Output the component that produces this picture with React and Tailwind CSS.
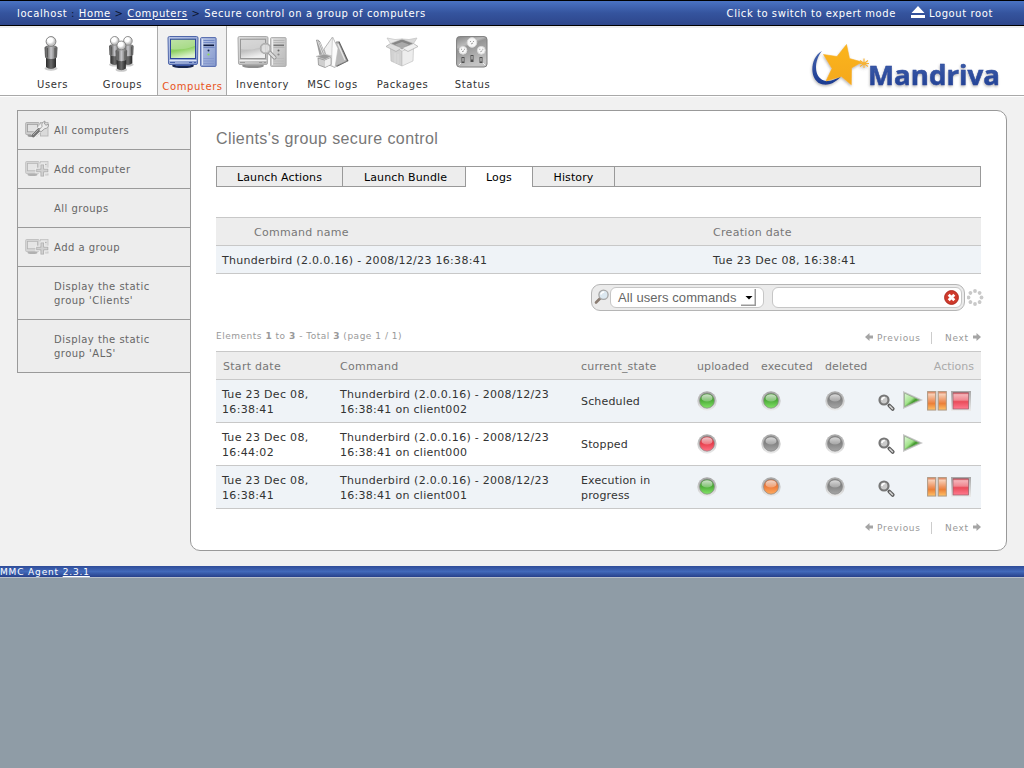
import React from "react";

function Computer({ tint, x = 0 }) {
  const blue = tint === "blue";
  const id = blue ? "blue" : "grey";
  return (
    <g transform={`translate(${x} 0)`}>
      <defs>
        <linearGradient id={`scr-${id}`} x1="0" y1="0" x2="0.3" y2="1">
          <stop offset="0" stopColor={blue ? "#b4dc98" : "#cfcfcf"} />
          <stop offset="0.6" stopColor={blue ? "#8ccf60" : "#c0c0c0"} />
          <stop offset="1" stopColor={blue ? "#dcf2cc" : "#efefef"} />
        </linearGradient>
        <linearGradient id={`case-${id}`} x1="0" y1="0" x2="1" y2="1">
          <stop offset="0" stopColor={blue ? "#b9c6e6" : "#dcdcdc"} />
          <stop offset="1" stopColor={blue ? "#8498cc" : "#b8b8b8"} />
        </linearGradient>
      </defs>
      <ellipse cx="16" cy="29.800" rx="11" ry="2.300" fill={blue ? "#17264f" : "#8e8e8e"} />
      <path d="M6 27h20l-3 3H9z" fill={blue ? "#3a55a4" : "#9c9c9c"} />
      <path d="M1 2q0-1.500 1.500-1.500h27q1.500 0 1.500 1.500l-.5 25q0 1.500-1.500 1.500H3q-1.500 0-1.500-1.500z" fill={`url(#case-${id})`} stroke={blue ? "#5067aa" : "#ababab"} />
      <rect x="3.500" y="3.200" width="25" height="19.300" fill={`url(#scr-${id})`} stroke={blue ? "#2c459b" : "#979797"} />
      <path d="M4 13q11 2 24-3v-6H4z" fill={blue ? "#cdeabb" : "#e4e4e4"} opacity="0.45" />
      <path d="M2.500 24.500h27" stroke={blue ? "#dce4f6" : "#eee"} />
      <path d="M3 26.500h5M22 26.500h3M27 26.500h2" stroke={blue ? "#4660a8" : "#999"} />
      <rect x="33.600" y="1.600" width="15.500" height="28.800" rx="1" fill={`url(#case-${id})`} stroke={blue ? "#5268ad" : "#adadad"} />
      <path d="M35.500 3v26" stroke={blue ? "#dbe3f5" : "#f0f0f0"} />
      <path d="M36.500 4.500h11M36.500 6.500h11M36.500 11.500h11" stroke={blue ? "#7389c4" : "#b6b6b6"} />
      <path d="M36.500 9.300h10.500" stroke={blue ? "#101c40" : "#777"} strokeWidth="1.600" />
      <circle cx="41.500" cy="14.500" r="1" fill={blue ? "#17264f" : "#666"} />
      <circle cx="41.500" cy="18.500" r="1.100" fill={blue ? "#8be04a" : "#8a8a8a"} />
      <path d="M36.500 22.500h10.500M36.500 25h10.500M36.500 27.500h10.500" stroke={blue ? "#8294cb" : "#b8b8b8"} strokeWidth="0.800" />
    </g>
  );
}

function Person({ x, y }) {
  return (
    <g transform={`translate(${x} ${y})`}>
      <ellipse cx="6.500" cy="32.500" rx="6.500" ry="2.200" fill="#777" opacity="0.4" />
      <path d="M1.500 21h10v10q-5 4-10 0z" fill="url(#leg)" />
      <path d="M1.500 10q5-2 10 0l1.500 1.500-.5 10q-6 3-12 0l-.5-10z" fill="url(#suit)" />
      <path d="M3 12v9.500M10.500 12v9.500" stroke="#4a4a4a" strokeWidth="0.800" />
      <circle cx="6.500" cy="5.500" r="4.900" fill="url(#head)" stroke="#777" strokeWidth="0.900" />
    </g>
  );
}

const PersonDefs = () => (
  <defs>
    <linearGradient id="suit" x1="0" x2="1">
      <stop offset="0" stopColor="#555" />
      <stop offset="0.3" stopColor="#8a8a8a" />
      <stop offset="0.5" stopColor="#c6c6ca" />
      <stop offset="0.75" stopColor="#8a8a8a" />
      <stop offset="1" stopColor="#555" />
    </linearGradient>
    <linearGradient id="leg" x1="0" x2="1">
      <stop offset="0" stopColor="#2b2b2b" />
      <stop offset="0.5" stopColor="#6c6c6c" />
      <stop offset="1" stopColor="#262626" />
    </linearGradient>
    <radialGradient id="head" cx="0.4" cy="0.35">
      <stop offset="0.5" stopColor="#fff" />
      <stop offset="1" stopColor="#c4c4c4" />
    </radialGradient>
  </defs>
);

const UsersIcon = () => (
  <svg width="50" height="38" viewBox="0 0 50 38">
    <PersonDefs />
    <Person x={17.500} y={0} />
  </svg>
);

const GroupsIcon = () => (
  <svg width="50" height="38" viewBox="0 0 50 38">
    <g transform="translate(12 0) scale(.88)">
      <Person x={0} y={0} />
      <Person x={15} y={0} />
    </g>
    <g transform="translate(18.500 4.500) scale(.9)">
      <Person x={0} y={0} />
    </g>
  </svg>
);

const ComputersIcon = () => (
  <svg width="50" height="38" viewBox="0 0 50 38">
    <Computer tint="blue" />
  </svg>
);

const InventoryIcon = () => (
  <svg width="50" height="38" viewBox="0 0 50 38">
    <Computer tint="grey" />
    <path d="M32 16l5.500 5.500" stroke="#929292" strokeWidth="4" strokeLinecap="round" />
    <path d="M32 16l5.500 5.500" stroke="#dedede" strokeWidth="2.400" strokeLinecap="round" />
    <circle cx="28.500" cy="12.500" r="4.800" fill="#e4e4e4" fillOpacity="0.8" stroke="#a2a2a2" strokeWidth="1.800" />
    <circle cx="28.500" cy="12.500" r="4.600" fill="none" stroke="#ccc" strokeWidth="0.700" />
  </svg>
);

const LogsIcon = () => (
  <svg width="50" height="38" viewBox="0 0 50 38">
    <path d="M29 6l3.500-.5 9 19.500-12 6z" fill="#555" />
    <path d="M29 6l2.500 0 8.500 19-11 5-6-6z" fill="#b9b9b9" stroke="#8a8a8a" strokeWidth="0.700" />
    <path d="M31 8l7 16" stroke="#e8e8e8" strokeWidth="1.200" />
    <path d="M25.500 1L17 13l5 16 6 2.500 1-16 2-2.500z" fill="#f1f1f1" stroke="#a4a4a4" strokeWidth="0.800" />
    <path d="M25.500 1l5.500 11.500-3 19-3.500-2 .5-17z" fill="#fcfcfc" stroke="#b8b8b8" strokeWidth="0.600" />
    <path d="M9.500 4q2-.5 3.500 2l7 17-6 1z" fill="#a2a2a2" stroke="#7a7a7a" strokeWidth="0.600" />
    <path d="M10.500 4.500l7 19M12.500 6l7 17" stroke="#dedede" strokeWidth="1" />
    <path d="M11 22l6.500 2 6.500-2.500v7L18 31.500l-6.500-2.500z" fill="#cfcfcf" stroke="#858585" strokeWidth="0.700" />
    <path d="M18 24.500v6.500l5.500-2.500v-6.500z" fill="#efefef" />
    <path d="M9 20.500l8-2.500 8 2-7 3.500z" fill="#9a9a9a" stroke="#c9c9c9" strokeWidth="0.800" />
  </svg>
);

const PackagesIcon = () => (
  <svg width="50" height="38" viewBox="0 0 50 38">
    <path d="M13.500 11l11.500 4v15l-11-5z" fill="#d2d2d2" stroke="#bbb" strokeWidth="0.700" />
    <path d="M36.500 11l-11.500 4v15l11-5z" fill="#ededed" stroke="#c2c2c2" strokeWidth="0.700" />
    <path d="M13 7l12-4 12 4-12 6.500z" fill="#858585" />
    <path d="M18 8.500l7-2.500 7 2.500-7 3.500z" fill="#aaa" />
    <path d="M13.500 7.500l-4.500 3 10 5 6-3.500z" fill="#dedede" stroke="#aaa" strokeWidth="0.700" />
    <path d="M36.500 7.500l4.500 3-10 5-6-3.500z" fill="#f0f0f0" stroke="#aaa" strokeWidth="0.700" />
    <path d="M13.500 7.500L10 2l8 1.500 7-.5z" fill="#e9e9e9" stroke="#c2c2c2" strokeWidth="0.700" />
    <path d="M36.500 7.500L40 2l-8 1.500-7-.5z" fill="#dadada" stroke="#c2c2c2" strokeWidth="0.700" />
    <path d="M18 17v10M21 18v10" stroke="#ddd" />
  </svg>
);

const StatusIcon = () => (
  <svg width="50" height="38" viewBox="0 0 50 38">
    <defs>
      <linearGradient id="dash" x1="0" y1="0" x2="0.4" y2="1">
        <stop offset="0" stopColor="#868686" />
        <stop offset="0.32" stopColor="#bababa" />
        <stop offset="0.4" stopColor="#949494" />
        <stop offset="1" stopColor="#c4c4c4" />
      </linearGradient>
    </defs>
    <rect x="9.600" y="0.600" width="30.400" height="30.400" rx="3" fill="url(#dash)" stroke="#7d7d7d" />
    {[[25, 6.500, 4.800], [16, 14.300, 3.900], [34.300, 14.300, 3.900]].map(([cx, cy, r]) => (
      <g key={cx}>
        <circle cx={cx} cy={cy} r={r} fill="#f7f7f7" stroke="#dadada" />
        <path d={`M${cx - 2} ${cy - 1}h1M${cx + 1} ${cy - 1}h1M${cx - 1} ${cy + 1.500}l2-1`} stroke="#888" strokeWidth="0.800" />
      </g>
    ))}
    <path d="M16 21v6M25 19v7M34 21v6" stroke="#505050" strokeWidth="3" />
    <path d="M16 22v3.500M25 20v3.500M34 22v3.500" stroke="#ccc" strokeWidth="1.200" />
    <path d="M12 29l2-2M38 29l-2-2" stroke="#eee" />
  </svg>
);

const Logo = () => (
  <svg width="196" height="52" viewBox="806 40 196 52" className="mt-[14px] block">
    <defs>
      <filter id="soft" x="-10%" y="-10%" width="125%" height="130%">
        <feDropShadow dx="-0.5" dy="1.5" stdDeviation="1.3" floodColor="#666" floodOpacity="0.45" />
      </filter>
      <linearGradient id="navy" x1="0" y1="0" x2="0" y2="1">
        <stop offset="0" stopColor="#4362ad" />
        <stop offset="1" stopColor="#1b3b91" />
      </linearGradient>
      <linearGradient id="gold" x1="0" y1="0" x2="0" y2="1">
        <stop offset="0" stopColor="#fbb51c" />
        <stop offset="1" stopColor="#f5a81c" />
      </linearGradient>
    </defs>
    <g filter="url(#soft)">
      <path d="M822 51C809 58 809 82 823 84.500C831 85.500 837 81 841 76.500C834 80 829 82 824 80.500C813.500 77 814 60 822 51Z" fill="url(#navy)" />
      <path d="M846.500 44.500L849.500 58.500L862 62L851.500 68L851.300 84.800L841.500 76.500L826 81L832 68.500L823.500 54.500L837 56.500Z" fill="url(#gold)" stroke="#f8ae1c" strokeWidth="0.600" strokeLinejoin="round" />
      <path d="M864 58.500v9.500M860 60.500l8 6M868 60.500l-8 6M859.500 63.500h9.500" stroke="#f6b232" strokeWidth="1.100" />
      <text x="868" y="84.800" fill="url(#navy)" stroke="#2c4a9c" strokeWidth="0.500" fontFamily="Open Sans, sans-serif" fontWeight="700" fontSize="26.500" textLength="132" lengthAdjust="spacingAndGlyphs">Mandriva</text>
    </g>
  </svg>
);

function SmallComputer({ kind }) {
  const faint = kind === "add";
  return (
    <svg width="24" height="20" viewBox="0 0 24 20" className="block" opacity={faint ? 0.7 : 1}>
      <ellipse cx="7.500" cy="15.500" rx="5" ry="1.500" fill="#999" />
      <rect x="0.700" y="2.500" width="13.500" height="12" rx="0.800" fill="#cfcfcf" stroke="#aaa" strokeWidth="0.900" />
      <rect x="2.500" y="4.300" width="10" height="7.500" fill="#e2e2e2" stroke="#999" strokeWidth="0.800" />
      <rect x="15.500" y="2.500" width="7.500" height="13.500" fill="#dadada" stroke="#b5b5b5" strokeWidth="0.900" />
      <path d="M17.500 5.500h4" stroke="#999" />
      {faint ? (
        <>
          <path d="M17.300 4.500v14M10.500 11.500h13.500" stroke="#f3f3f3" strokeWidth="5.500" />
          <path d="M17.300 5.500v12M11.300 11.500h12" stroke="#8f8f8f" strokeWidth="3.600" />
          <path d="M17.300 6.300v10.400M12.100 11.500h10.400" stroke="#c6c6c6" strokeWidth="2" />
        </>
      ) : (
        <>
          <path d="M8 16.500l10-11" stroke="#f2f2f2" strokeWidth="5.500" />
          <path d="M8.300 15.500l5.500-5.500" stroke="#757575" strokeWidth="3.800" strokeLinecap="round" />
          <path d="M8 15l5.500-5.500" stroke="#b0b0b0" strokeWidth="1" />
          <path d="M14 10l3-3.500q-1-4 3-5.500l-.5 3 1.500 1.200 2.500-1q.5 4-4 4.600l-3.500 3z" fill="#ececec" stroke="#999" strokeWidth="0.900" />
        </>
      )}
    </svg>
  );
}

const ledColors = {
  green: ["#3c8a2c", "#4fae3a", "#83e468"],
  red: ["#c02c34", "#e8414f", "#ff7285"],
  orange: ["#c8602c", "#ee7c3c", "#ffab5e"],
  grey: ["#6c6c6c", "#858585", "#a6a6a6"],
};

const Led = ({ color }) => (
  <svg width="20" height="20" viewBox="0 0 20 20" className="block">
    <defs>
      <linearGradient id={`led-${color}`} x1="0" y1="0" x2="0" y2="1">
        <stop offset="0" stopColor={ledColors[color][0]} />
        <stop offset="0.5" stopColor={ledColors[color][1]} />
        <stop offset="1" stopColor={ledColors[color][2]} />
      </linearGradient>
      <linearGradient id="ring" x1="0" y1="0" x2="0" y2="1">
        <stop offset="0" stopColor="#a6a6a6" />
        <stop offset="1" stopColor="#ececec" />
      </linearGradient>
      <linearGradient id="gloss" x1="0" y1="0" x2="0" y2="1">
        <stop offset="0" stopColor="#fff" stopOpacity="0.75" />
        <stop offset="1" stopColor="#fff" stopOpacity="0.25" />
      </linearGradient>
    </defs>
    <circle cx="10" cy="10" r="9.700" fill="url(#ring)" />
    <circle cx="10" cy="9.700" r="7.500" fill={`url(#led-${color})`} stroke="#8a8a8a" strokeWidth="0.700" />
    <ellipse cx="10" cy="6.900" rx="5.500" ry="3.700" fill="url(#gloss)" />
  </svg>
);

const Magnifier = () => (
  <svg width="18" height="18" viewBox="0 0 18 18" className="block">
    <path d="M11.300 11.500l3.400 3.400" stroke="#5d5d5d" strokeWidth="3.800" strokeLinecap="round" />
    <path d="M11.800 12l2.700 2.700" stroke="#d8d8d8" strokeWidth="1.500" strokeLinecap="round" />
    <circle cx="6" cy="6" r="4.500" fill="#cacaca" stroke="#777" strokeWidth="2.200" />
    <path d="M3.800 6q.5-2.500 3-2.500" stroke="#fff" strokeWidth="1.600" fill="none" />
  </svg>
);

const Play = () => (
  <svg width="20" height="18" viewBox="0 0 20 18" className="block">
    <defs>
      <linearGradient id="play" x1="0" y1="0" x2="1" y2="1">
        <stop offset="0" stopColor="#e3f8da" />
        <stop offset="0.45" stopColor="#a2e48b" />
        <stop offset="0.6" stopColor="#469b30" />
        <stop offset="1" stopColor="#6ed653" />
      </linearGradient>
    </defs>
    <path d="M0 0l20 9L0 18z" fill="#c4c4c4" />
    <path d="M0.800 1.500v15l7-3z" fill="#d9d9d9" />
    <path d="M1.500 2.200L16.500 9 1.500 15.800z" fill="url(#play)" stroke="#8aa582" strokeWidth="0.700" />
  </svg>
);

const Pause = () => (
  <svg width="20" height="20" viewBox="0 0 20 20" className="block">
    <defs>
      <linearGradient id="pause" x1="0" y1="0" x2="0" y2="1">
        <stop offset="0" stopColor="#d9734a" />
        <stop offset="0.15" stopColor="#f8ceb4" />
        <stop offset="0.5" stopColor="#ee9460" />
        <stop offset="0.65" stopColor="#ec8038" />
        <stop offset="1" stopColor="#ffc267" />
      </linearGradient>
    </defs>
    <path d="M0 0h20v19.500H0z" fill="#ddd" />
    <rect x="0.600" y="0.600" width="8" height="18.400" fill="url(#pause)" stroke="#b09a84" />
    <rect x="11.300" y="0.600" width="8" height="18.400" fill="url(#pause)" stroke="#b09a84" />
  </svg>
);

const Stop = () => (
  <svg width="20" height="20" viewBox="0 0 20 20" className="block">
    <defs>
      <linearGradient id="stop" x1="0" y1="0" x2="0" y2="1">
        <stop offset="0" stopColor="#c03a45" />
        <stop offset="0.12" stopColor="#f5b3b8" />
        <stop offset="0.45" stopColor="#f08891" />
        <stop offset="0.55" stopColor="#ea4c5a" />
        <stop offset="1" stopColor="#ff7b90" />
      </linearGradient>
    </defs>
    <rect width="20" height="20" fill="url(#ring)" />
    <rect x="2" y="1.700" width="15.600" height="16.300" fill="url(#stop)" stroke="#96606a" strokeWidth="0.700" />
  </svg>
);

const Arrow = ({ right }) => (
  <svg width="9" height="8" viewBox="0 0 9 8" className={right ? "-mt-[2px] block rotate-180" : "-mt-[2px] block"}>
    <path d="M0 4L4.500 0v2.500H8v3H4.500V8z" fill="#a5a5a5" />
  </svg>
);

const Pager = () => (
  <div className="flex h-[13px] items-center text-[9px] leading-[13px] text-[#999]">
    <Arrow />
    <span className="ml-[3px] w-[46px] whitespace-nowrap pt-px tracking-[0.700px]">Previous</span>
    <span className="ml-[8px] h-[12px] w-px bg-[#ccc]" />
    <span className="ml-[13px] w-[27px] whitespace-nowrap pt-px tracking-[0.700px]">Next</span>
    <Arrow right />
  </div>
);

const nav = [
  ["Users", UsersIcon],
  ["Groups", GroupsIcon],
  ["Computers", ComputersIcon],
  ["Inventory", InventoryIcon],
  ["MSC logs", LogsIcon],
  ["Packages", PackagesIcon],
  ["Status", StatusIcon],
];

const side = [
  ["All computers", "tool"],
  ["Add computer", "add"],
  ["All groups"],
  ["Add a group", "add"],
  ["Display the static group 'Clients'"],
  ["Display the static group 'ALS'"],
];

const rows = [
  { t: "16:38:41", c: "client002", s: "Scheduled", leds: ["green", "green", "grey"], play: true, ctl: true },
  { t: "16:44:02", c: "client000", s: "Stopped", leds: ["red", "grey", "grey"], play: true, ctl: false },
  { t: "16:38:41", c: "client001", s: "Execution in progress", leds: ["green", "orange", "grey"], play: false, ctl: true },
];

const columns = "grid grid-cols-[118px_241px_116px_64px_64px_53px_1fr] items-center pl-[6px]";

export default function App() {
  return (
    <div className="flex h-[768px] w-[1024px] flex-col overflow-hidden bg-[#8f9ca6] font-['DejaVu_Sans',sans-serif] text-[10px]">
      <header className="flex h-[26px] shrink-0 items-center justify-between whitespace-pre border-y border-black bg-linear-to-b from-[#4a73c3] via-[#35549e] to-[#2d468b] pl-[17px] pr-[31px] text-white">
        <div className="tracking-[0.600px]">
          localhost<span className="text-[#0d1630]"> : </span>
          <a className="underline underline-offset-2">Home</a>
          <span className="text-[#0d1630]"> &gt; </span>
          <a className="underline underline-offset-2">Computers</a>
          <span className="text-[#0d1630]"> &gt; </span>Secure control on a group of computers
        </div>
        <div className="flex items-center tracking-[0.560px]">
          <span>Click to switch to expert mode</span>
          <svg width="14" height="12" viewBox="0 0 14 12" className="-mt-[3px] ml-[15px] mr-[4px]">
            <path d="M7 0l6.500 7H.5zM0 9h14v3H0z" fill="#fff" />
          </svg>
          <span className="tracking-[0.600px]">Logout root</span>
        </div>
      </header>

      <div className="flex h-[70px] shrink-0 justify-between border-b border-[#a9a9a9] bg-white pl-[17px] pr-[22px] shadow-[inset_0_2px_0_#eeeeee]">
        <nav className="flex text-[#333]">
          {nav.map(([name, Icon]) => {
            const active = name === "Computers";
            return (
              <div
                key={name}
                className={
                  active
                    ? "flex w-[70px] flex-col items-center border-x border-[#aaa] bg-[#f1f1f1] pt-[10px] text-[#e8541c]"
                    : "flex w-[70px] flex-col items-center pt-[10px]"
                }
              >
                <Icon />
                <span className={active ? "mt-[5px] whitespace-nowrap pl-px leading-[16px] tracking-[0.600px]" : "mt-[3px] whitespace-nowrap pl-px leading-[16px] tracking-[0.600px]"}>{name}</span>
              </div>
            );
          })}
        </nav>
        <Logo />
      </div>

      <div className="flex h-[470px] shrink-0 items-start border-t border-white bg-[#f1f1f1] pl-[17px] pt-[13px]">
        <aside className="w-[173px] border-b border-l border-[#9a9a9a] text-[#666]">
          {side.map(([label, icon], i) => (
            <div key={label} className={i > 3 ? "flex h-[53px] items-center border-t border-[#9a9a9a] bg-[#ededed]" : "flex h-[39px] items-center border-t border-[#9a9a9a] bg-[#ededed]"}>
              <div className="w-[36px] pl-[7px]">{icon && <SmallComputer kind={icon} />}</div>
              <span className="w-[115px] pt-[2px] leading-[14px] tracking-[0.480px]">{label}</span>
            </div>
          ))}
        </aside>

        <main className="flex h-[441px] w-[817px] flex-col rounded-r-[10px] rounded-bl-[10px] border border-[#999] bg-white pl-[25px] pr-[25px] text-[11px] text-[#333]">
          <h1 className="mt-[17px] whitespace-nowrap font-['Liberation_Sans',sans-serif] text-[16px] leading-[22px] tracking-[0.400px] text-[#777]">Clients's group secure control</h1>

          <div className="mt-[16px] flex h-[21px] shrink-0 tracking-[0.110px] text-black">
            <div className="flex w-[127px] items-center justify-center border border-[#999] bg-[#ededed] pt-[3px]">Launch Actions</div>
            <div className="flex w-[123px] items-center justify-center border-y border-r border-[#999] bg-[#ededed] pl-[3px] pt-[3px]">Launch Bundle</div>
            <div className="flex w-[66px] items-center justify-center border-t border-[#999] bg-white pt-[2px]">Logs</div>
            <div className="flex w-[83px] items-center justify-center border border-[#999] bg-[#ededed] pt-[3px]">History</div>
            <div className="flex-1 border-y border-r border-[#999] bg-[#ededed]" />
          </div>

          <div className="mt-[30px] shrink-0 border-t border-[#c8c8c8] tracking-[0.300px]">
            <div className="grid h-[28px] grid-cols-[497px_1fr] items-center border-b border-[#c8c8c8] bg-[#ededed] pt-[3px] text-[#777]">
              <span className="pl-[38px]">Command name</span>
              <span>Creation date</span>
            </div>
            <div className="grid h-[28px] grid-cols-[497px_1fr] items-center border-b border-[#c8c8c8] bg-[#eff3f7] pt-[3px]">
              <span className="pl-[6px]">Thunderbird (2.0.0.16) - 2008/12/23 16:38:41</span>
              <span className="tracking-[0.350px]">Tue 23 Dec 08, 16:38:41</span>
            </div>
          </div>

          <div className="-mr-[3px] mt-[10px] flex shrink-0 items-center justify-end">
            <div className="flex h-[27px] w-[374px] items-center rounded-[9px] border border-[#b5b5b5] bg-[#ebebeb] pl-[2px] pr-[2px]">
              <svg width="16" height="17" viewBox="0 0 16 17">
                <path d="M6.500 9l-4.500 4.500" stroke="#8a7c72" strokeWidth="2.600" strokeLinecap="round" />
                <circle cx="9.500" cy="5.800" r="4.600" fill="#dce8f0" stroke="#a6a6a6" strokeWidth="1.300" />
                <path d="M6.700 5.500q1-2.500 3.500-2.500" stroke="#fff" strokeWidth="1.500" fill="none" />
              </svg>
              <div className="flex h-[21px] w-[154px] items-center justify-between rounded-[6px] border border-[#c6c6c6] bg-white pl-[7px] pr-[7px] font-['Liberation_Sans',sans-serif] text-[13px] text-[#666]">
                <span className="whitespace-nowrap pt-px tracking-[0.080px]">All users commands</span>
                <svg width="15" height="17" viewBox="0 0 15 17">
                  <path d="M14.250 0v16.250H0" stroke="#999" strokeWidth="1.500" fill="none" />
                  <path d="M4.500 7h7L8 10.500z" fill="#000" />
                </svg>
              </div>
              <div className="ml-[8px] flex h-[21px] flex-1 items-center justify-end rounded-[6px] border border-[#c6c6c6] bg-white pr-[2px]">
                <svg width="15" height="15" viewBox="0 0 15 15">
                  <circle cx="7.500" cy="7.500" r="6.900" fill="#cf3a2c" stroke="#b02c22" />
                  <path d="M4.700 4.700l5.600 5.600M10.300 4.700l-5.600 5.600" stroke="#fff" strokeWidth="2.800" />
                </svg>
              </div>
            </div>
            <svg width="17" height="17" viewBox="0 0 17 17" className="-mt-px ml-[2px]">
              {[0, 45, 90, 135, 180, 225, 270, 315].map((a) => (
                <circle key={a} cx="8" cy="2" r="1.900" fill="#c9c9c9" transform={`rotate(${a} 8 8.500)`} />
              ))}
            </svg>
          </div>

          <div className="mt-[18px] flex h-[22px] shrink-0 items-start justify-between">
            <span className="pt-px text-[9px] leading-[13px] tracking-[0.510px] text-[#999]">
              Elements <b>1</b> to <b>3</b> - Total <b>3</b> (page 1 / 1)
            </span>
            <div className="pt-[2px]"><Pager /></div>
          </div>

          <div className="shrink-0 border-t border-[#c8c8c8] tracking-[0.280px]">
            <div className={`${columns} h-[28px] border-b border-[#c8c8c8] bg-[#ededed] pt-[3px] text-[#777]`}>
              <span className="pl-px">Start date</span>
              <span>Command</span>
              <span className="tracking-[0.180px]">current_state</span>
              <span className="tracking-[0.100px]">uploaded</span>
              <span className="tracking-[0.150px]">executed</span>
              <span className="tracking-[0.100px]">deleted</span>
              <span className="pr-[7px] text-right tracking-normal text-[#aaa]">Actions</span>
            </div>
            {rows.map((r, i) => (
              <div key={i} className={i % 2 ? `${columns} h-[43px] border-b border-[#c8c8c8] bg-white leading-[15px]` : `${columns} h-[43px] border-b border-[#c8c8c8] bg-[#eff3f7] leading-[15px]`}>
                <span className="pt-[2px] tracking-[0.320px]">Tue 23 Dec 08,<br />{r.t}</span>
                <span className="pt-[2px]">Thunderbird (2.0.0.16) - 2008/12/23<br />16:38:41 on {r.c}</span>
                <span className={i === 2 ? "w-[80px] pt-[2px] tracking-[0.160px]" : "w-[80px] tracking-[0.160px]"}>{r.s}</span>
                {r.leds.map((c, k) => (
                  <span key={k}><Led color={c} /></span>
                ))}
                <div className="-mt-px grid h-[20px] grid-cols-[25px_24px_24px_20px]">
                  <span className="pt-[3px]"><Magnifier /></span>
                  <span>{r.play && <Play />}</span>
                  <span>{r.ctl && <Pause />}</span>
                  <span>{r.ctl && <Stop />}</span>
                </div>
              </div>
            ))}
          </div>

          <div className="mt-[12px] flex justify-end"><Pager /></div>
        </main>
      </div>

      <footer className="flex h-[12px] shrink-0 items-center whitespace-pre border-b border-[#b7bfc9] bg-linear-to-b from-[#2f4c98] via-[#4269ba] to-[#27408a] pt-[2px] text-[9px] leading-[11px] tracking-[0.850px] text-white">
        MMC Agent <span className="underline underline-offset-1">2.3.1</span>
      </footer>
    </div>
  );
}
